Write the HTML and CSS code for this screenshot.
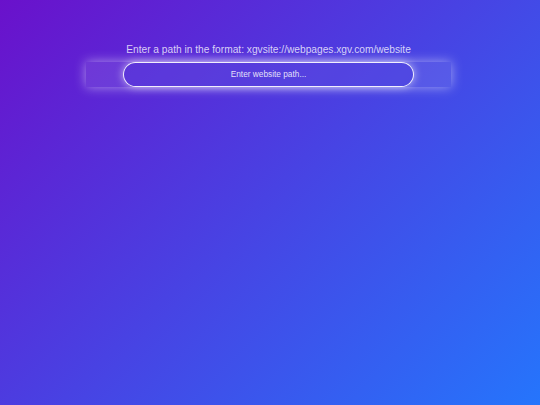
FILE: index.html
```html
<!DOCTYPE html>
<html>
<head>
<meta charset="utf-8">
<link rel="stylesheet" href="styles.css">
</head>
<body>
<div class="page">
  <p class="hint">Enter a path in the format: xgvsite://webpages.xgv.com/website</p>
  <div class="bar">
    <input class="path-input" type="text" placeholder="Enter website path...">
  </div>
</div>
</body>
</html>
```

FILE: styles.css
```css
html, body {
  margin: 0;
  height: 100%;
}
body {
  background: linear-gradient(135deg, #6a11cb 0%, #2575fc 100%);
  font-family: "Liberation Sans", Arial, sans-serif;
  overflow: hidden;
}
.page {
  display: flex;
  flex-direction: column;
  align-items: center;
  padding-top: 43px;
  padding-right: 3px;
}
.hint {
  margin: 0 0 6px;
  font-size: 10.2px;
  color: rgba(255, 255, 255, 0.78);
  line-height: 13px;
}
.bar {
  width: 365px;
  height: 25px;
  display: flex;
  justify-content: center;
  align-items: center;
  background: rgba(255, 255, 255, 0.1);
  box-shadow: 0 0 12px rgba(255, 255, 255, 0.5);
}
.path-input {
  box-sizing: border-box;
  width: 291px;
  height: 25px;
  margin-top: -1px;
  border: 1.5px solid rgba(255, 255, 255, 0.92);
  border-radius: 13px;
  background: rgba(60, 40, 220, 0.3);
  box-shadow: 0 0 8px rgba(255, 255, 255, 0.6);
  color: #fff;
  text-align: center;
  font-family: "Liberation Sans", Arial, sans-serif;
  font-size: 8.3px;
  outline: none;
  padding: 0 10px;
}
.path-input::placeholder {
  color: rgba(255, 255, 255, 0.85);
}
```
